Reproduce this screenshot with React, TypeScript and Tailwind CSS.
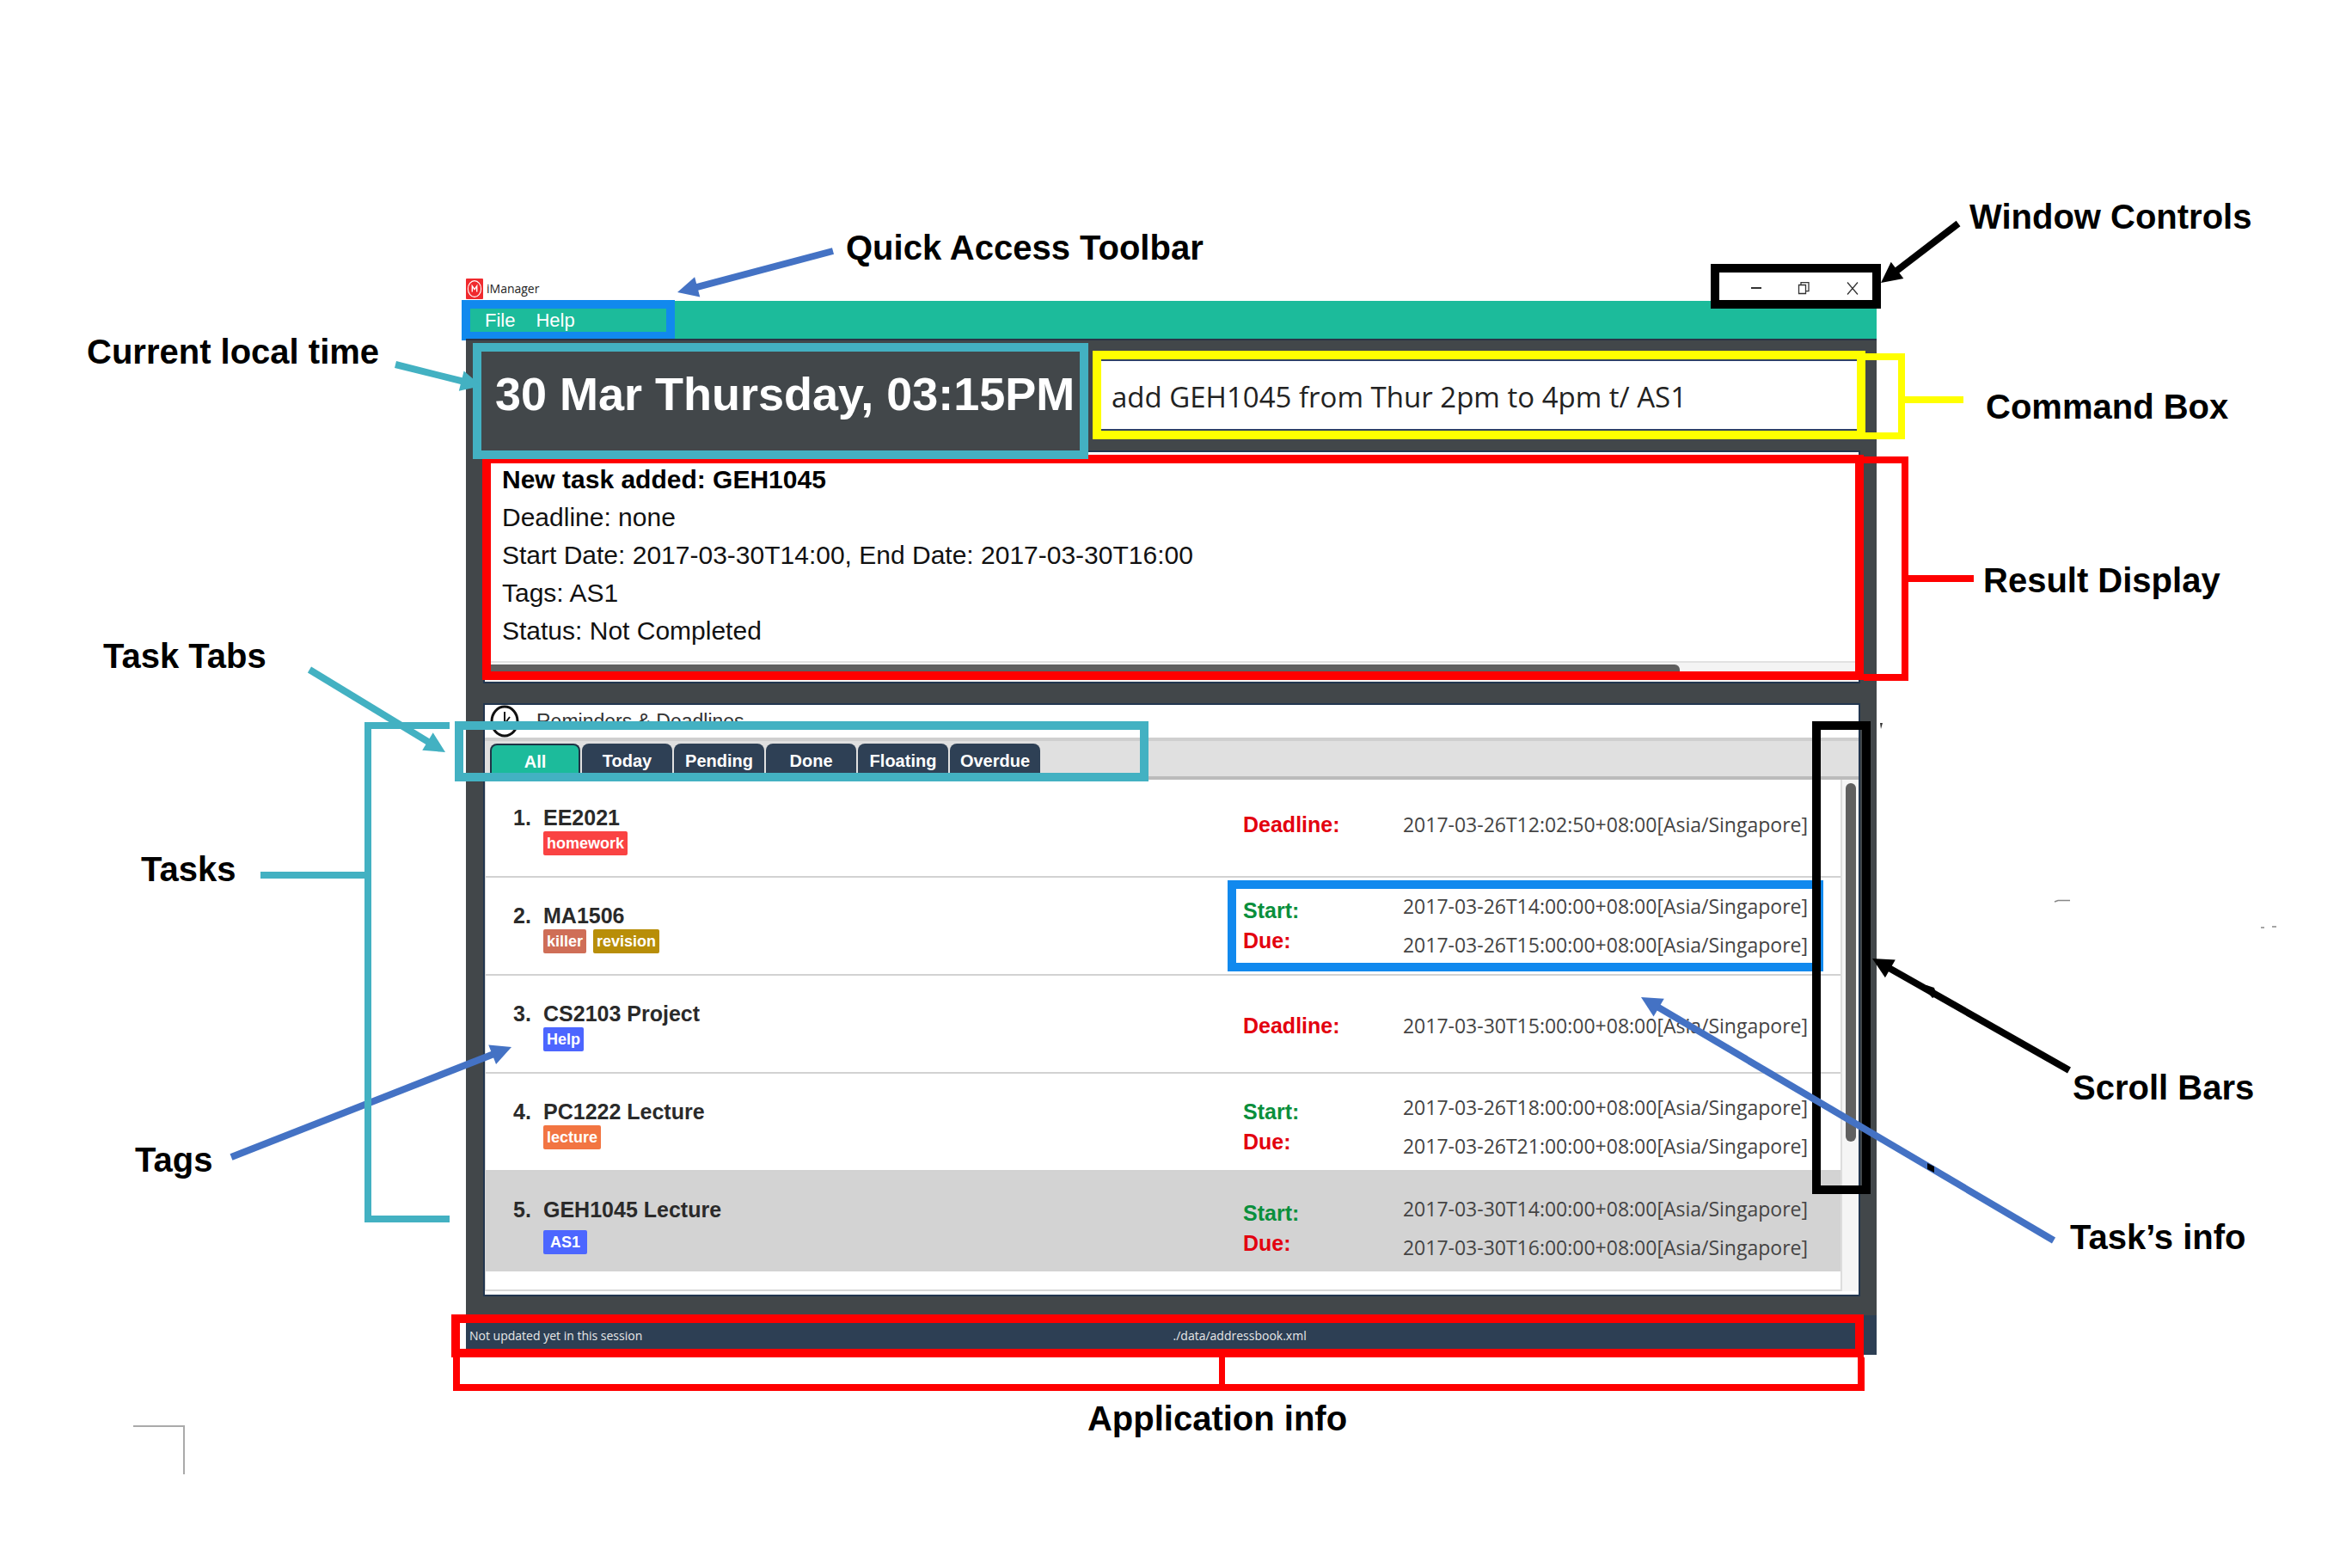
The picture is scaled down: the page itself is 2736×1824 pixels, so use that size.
import React, { useState } from "react";

type Tag = { name: string; color: string };
type Detail = { label: string; color: string; value: string };
type Task = { title: string; tags: Tag[]; details: Detail[]; shift: string };

const RED = "text-[#e3000f]";
const GREEN = "text-[#0a8f3c]";

const tasks: Task[] = [
  {
    title: "EE2021",
    tags: [{ name: "homework", color: "bg-[#fa4343]" }],
    details: [{ label: "Deadline:", color: RED, value: "2017-03-26T12:02:50+08:00[Asia/Singapore]" }],
    shift: "pb-2",
  },
  {
    title: "MA1506",
    tags: [
      { name: "killer", color: "bg-[#cf6e57]" },
      { name: "revision", color: "bg-[#b88e08]" },
    ],
    details: [
      { label: "Start:", color: GREEN, value: "2017-03-26T14:00:00+08:00[Asia/Singapore]" },
      { label: "Due:", color: RED, value: "2017-03-26T15:00:00+08:00[Asia/Singapore]" },
    ],
    shift: "pt-0",
  },
  {
    title: "CS2103 Project",
    tags: [{ name: "Help", color: "bg-[#4c66ff]" }],
    details: [{ label: "Deadline:", color: RED, value: "2017-03-30T15:00:00+08:00[Asia/Singapore]" }],
    shift: "pt-1",
  },
  {
    title: "PC1222 Lecture",
    tags: [{ name: "lecture", color: "bg-[#f27542]" }],
    details: [
      { label: "Start:", color: GREEN, value: "2017-03-26T18:00:00+08:00[Asia/Singapore]" },
      { label: "Due:", color: RED, value: "2017-03-26T21:00:00+08:00[Asia/Singapore]" },
    ],
    shift: "pt-3",
  },
  {
    title: "GEH1045 Lecture",
    tags: [{ name: "AS1", color: "bg-[#4c66ff]" }],
    details: [
      { label: "Start:", color: GREEN, value: "2017-03-30T14:00:00+08:00[Asia/Singapore]" },
      { label: "Due:", color: RED, value: "2017-03-30T16:00:00+08:00[Asia/Singapore]" },
    ],
    shift: "pt-4",
  },
];

const tabs = ["All", "Today", "Pending", "Done", "Floating", "Overdue"];

/** Coloured outline laid over the part it points out. */
function Frame({ className }: { className: string }) {
  return <div aria-hidden="true" className={`pointer-events-none absolute border-10 ${className}`} />;
}

/** Straight arrow with a solid triangular head at (x2, y2). */
function Arrow({ x1, y1, x2, y2, color }: { x1: number; y1: number; x2: number; y2: number; color: string }) {
  const length = Math.hypot(x2 - x1, y2 - y1);
  const ux = (x2 - x1) / length;
  const uy = (y2 - y1) / length;
  const bx = x2 - ux * 24;
  const by = y2 - uy * 24;
  return (
    <g fill={color} stroke="none">
      <line x1={x1} y1={y1} x2={bx + ux * 2} y2={by + uy * 2} stroke={color} strokeWidth={8} />
      <polygon points={`${x2},${y2} ${bx - uy * 12},${by + ux * 12} ${bx + uy * 12},${by - ux * 12}`} />
    </g>
  );
}

function Label({ className, children }: { className: string; children: React.ReactNode }) {
  return (
    <p className={`absolute text-[40px] leading-12 font-bold whitespace-nowrap text-black ${className}`}>{children}</p>
  );
}

function TitleBar() {
  return (
    <header className="relative flex h-8 items-center justify-between bg-white">
      <div className="flex items-center gap-1 pt-1">
        <svg viewBox="0 0 20 24" preserveAspectRatio="none" className="h-6 w-5" aria-hidden="true">
          <rect width="20" height="24" rx="1" fill="#f02a2e" />
          <ellipse cx="10" cy="12" rx="7.6" ry="9.400" fill="none" stroke="#fff" strokeWidth="1.1" />
          <path d="M7.300 15.500V8.800L10 12.600l2.700-3.800v6.700" fill="none" stroke="#fff" strokeWidth="1.4" />
        </svg>
        <h1 className="font-['Open_Sans','Noto_Sans',sans-serif] text-[14px] leading-5 text-[#222]">iManager</h1>
      </div>
      <div className="flex items-center pt-1 pr-5">
        <button aria-label="Minimize" className="flex h-6 w-14 items-center justify-center">
          <svg viewBox="0 0 16 16" className="size-4" stroke="#333" strokeWidth="2" fill="none">
            <path d="M2 7h12" />
          </svg>
        </button>
        <button aria-label="Restore" className="flex h-6 w-14 items-center justify-center">
          <svg viewBox="0 0 16 16" className="size-4" stroke="#333" strokeWidth="1.3" fill="none">
            <path d="M1.500 3.500h8v10h-8zM4 3.500V.7h9v10H9.500" />
          </svg>
        </button>
        <button aria-label="Close" className="flex h-6 w-9 items-center justify-end">
          <svg viewBox="0 0 16 16" className="size-4" stroke="#333" strokeWidth="1.3" fill="none">
            <path d="M2 .5l12 14M14 .5L2 14.500" />
          </svg>
        </button>
      </div>
      <Frame className="top-[-11px] right-[-5px] z-20 h-[52px] w-[198px] border-black" />
    </header>
  );
}

function MenuBar() {
  return (
    <nav className="relative flex h-11 items-center gap-6 bg-[#1cbb9b] pl-[22px] text-[22px] text-white">
      <button>File</button>
      <button>Help</button>
      <Frame className="-top-px left-[-5px] h-[47px] w-[248px] border-[#1189ee]" />
    </nav>
  );
}

function CommandRow() {
  return (
    <div className="relative z-10 flex h-[130px] items-start gap-[5px] border-t-2 border-[#2b3346] px-2 pt-[3px]">
      <time className="flex h-[135px] w-[716px] shrink-0 items-start border-10 border-[#43b1c2] pt-[14px] pl-4 text-[54px] leading-[70px] font-bold whitespace-nowrap text-white">
        30 Mar Thursday, 03:15PM
      </time>
      <div className="relative mt-[9px] mr-[5px] h-[103px] flex-1 border-10 border-[#ffff00]">
        <input
          aria-label="Command"
          defaultValue="add GEH1045 from Thur 2pm to 4pm t/ AS1"
          className="h-full w-full border-y-2 border-[#2f4265] bg-white px-3 pt-1 font-['Open_Sans','Noto_Sans',sans-serif] text-[33px] text-[#222] outline-none"
        />
        <div aria-hidden="true" className="absolute top-[-7px] -right-14 h-[100px] w-[46px] border-8 border-l-0 border-[#ffff00]" />
        <div aria-hidden="true" className="absolute top-[43px] left-full ml-14 h-2 w-[68px] bg-[#ffff00]" />
      </div>
    </div>
  );
}

function ResultDisplay() {
  return (
    <section aria-label="Result" className="relative mr-[19px] ml-5 h-[271px] border-2 border-[#22364f] bg-white">
      <div className="pt-[10px] pl-5 text-[30px] leading-11 text-[#111]">
        <p className="font-bold text-black">New task added: GEH1045</p>
        <p>Deadline: none</p>
        <p>Start Date: 2017-03-30T14:00, End Date: 2017-03-30T16:00</p>
        <p>Tags: AS1</p>
        <p>Status: Not Completed</p>
      </div>
      <div className="absolute right-0 bottom-0 left-0 h-6 border-t-2 border-[#e2e2e2] bg-[#f4f4f4] pt-0.5">
        <div className="h-4 w-[87%] rounded-r-md bg-[#5f5f5f]" />
      </div>
      <Frame className="top-[3px] right-[-6px] bottom-[2px] left-[-3px] border-[#ff0000]" />
      <div aria-hidden="true" className="absolute top-[5px] right-[-58px] h-[261px] w-[52px] border-8 border-l-0 border-[#ff0000]" />
      <div aria-hidden="true" className="absolute top-[143px] left-full ml-[58px] h-2 w-[76px] bg-[#ff0000]" />
    </section>
  );
}

function TaskRow({ task, index, selected }: { task: Task; index: number; selected: boolean }) {
  return (
    <li
      className={`relative flex pr-[38px] pl-8 ${
        selected ? "h-[116px] bg-[#d3d3d3]" : "h-[114px] border-b-2 border-[#d2d2d2]"
      }`}
    >
      <div className="flex flex-1 pt-7 text-[#2a2a2a]">
        <span className="w-[35px] text-[25px] leading-8 font-bold">{index + 1}.</span>
        <div>
          <h3 className="text-[25px] leading-8 font-bold">{task.title}</h3>
          <div className={`flex gap-2 ${selected ? "pt-2" : ""}`}>
            {task.tags.map((tag) => (
              <span
                key={tag.name}
                className={`rounded-xs text-[18px] leading-7 font-bold text-white ${
                  selected ? "px-2" : "px-1"
                } ${tag.color}`}
              >
                {tag.name}
              </span>
            ))}
          </div>
        </div>
      </div>
      <dl className={`flex w-[657px] items-center ${task.shift}`}>
        <div className="w-[186px] text-[25px] leading-[35px] font-bold">
          {task.details.map((d) => (
            <dt key={d.label} className={d.color}>
              {d.label}
            </dt>
          ))}
        </div>
        <div className="font-['Open_Sans','Noto_Sans',sans-serif] text-[23px] leading-[45px] whitespace-nowrap text-[#444]">
          {task.details.map((d) => (
            <dd key={d.label}>{d.value}</dd>
          ))}
        </div>
      </dl>
      {index === 1 && <Frame className="top-[3px] right-5 h-[106px] w-[693px] border-[#1189ee]" />}
    </li>
  );
}

function TaskPanel() {
  const [active, setActive] = useState("All");
  return (
    <section aria-label="Tasks" className="relative mt-[23px] mr-[19px] ml-5 border-2 border-[#22364f] bg-white">
      <div className="flex h-[38px] items-center gap-5 pl-1.5">
        <svg viewBox="0 0 34 38" className="h-[38px] w-[34px]" fill="none" stroke="#111" aria-hidden="true">
          <ellipse cx="17" cy="19" rx="15" ry="17" strokeWidth="3" />
          <path d="M17 8v14l6-8" strokeWidth="2" />
        </svg>
        <h2 className="text-[23px] text-[#333]">Reminders &amp; Deadlines</h2>
      </div>
      <div
        role="tablist"
        className="flex h-[49px] items-end gap-0.5 border-t-4 border-b-4 border-t-[#cfcfcf] border-b-[#bbb] bg-[#e0e0e0] pl-1.5"
      >
        {tabs.map((tab) => (
          <button
            key={tab}
            role="tab"
            aria-selected={tab === active}
            onClick={() => setActive(tab)}
            className={`h-[38px] w-[105px] rounded-t-lg pt-0.5 text-[20px] font-bold text-white ${
              tab === active ? "border-2 border-b-0 border-[#1f3346] bg-[#1cbb9b]" : "bg-[#2e4055]"
            }`}
          >
            {tab}
          </button>
        ))}
      </div>
      <div className="flex h-[599px] pb-1">
        <ul className="flex-1 border-b-2 border-l border-[#d8d8d8]">
          {tasks.map((task, i) => (
            <TaskRow key={task.title} task={task} index={i} selected={i === 4} />
          ))}
        </ul>
        <div className="flex w-[21px] justify-center border-l-2 border-[#ddd] bg-[#f5f5f5] pt-1">
          <div className="h-[417px] w-3 rounded-md bg-[#606060]" />
        </div>
      </div>
      <Frame className="top-[19px] left-[-35px] h-[70px] w-[807px] border-[#43b1c2]" />
      <Frame className="top-[19px] right-[-14px] h-[550px] w-[68px] border-black" />
    </section>
  );
}

function StatusBar() {
  return (
    <footer className="relative mt-[22px] flex h-[46px] items-center bg-[#2d3f54] pl-1 font-['Open_Sans','Noto_Sans',sans-serif] text-[14px] text-[#e8e8e8]">
      <span className="w-1/2">Not updated yet in this session</span>
      <span>./data/addressbook.xml</span>
      <Frame className="-top-px right-[15px] left-[-17px] h-[50px] border-[#ff0000]" />
      <div
        aria-hidden="true"
        className="absolute top-[49px] right-[14px] left-[-15px] flex h-[39px] border-8 border-t-0 border-[#ff0000]"
      >
        <div className="flex-6 border-r-7 border-[#ff0000]" />
        <div className="flex-5" />
      </div>
    </footer>
  );
}

export default function App() {
  return (
    <main className="relative min-h-screen overflow-hidden bg-white pt-[318px] pr-[553px] pb-40 pl-[542px] font-['Liberation_Sans',Arial,sans-serif]">
      <div className="bg-[#42474a]">
        <TitleBar />
        <MenuBar />
        <CommandRow />
        <ResultDisplay />
        <TaskPanel />
        <StatusBar />
      </div>
      <p className="mt-[50px] pl-[107px] text-center text-[40px] leading-12 font-bold text-black">Application info</p>

      <svg aria-hidden="true" className="pointer-events-none absolute top-0 left-0 z-20 h-[1824px] w-[1100px]" fill="none">
        <Arrow x1={969} y1={292} x2={788} y2={340} color="#4472c4" />
        <Arrow x1={460} y1={424} x2={560} y2={449} color="#43b1c2" />
        <Arrow x1={360} y1={779} x2={518} y2={875} color="#43b1c2" />
        <Arrow x1={269} y1={1346} x2={595} y2={1218} color="#4472c4" />
        <path d="M523 844H428V1418H523M303 1018H428" stroke="#43b1c2" strokeWidth={8} />
        <path d="M155 1659H214V1715" stroke="#aaa" strokeWidth={2} />
      </svg>
      <svg
        aria-hidden="true"
        viewBox="1836 0 900 1824"
        className="pointer-events-none absolute top-0 right-0 z-20 h-[1824px] w-[900px]"
        fill="none"
      >
        <Arrow x1={2278} y1={260} x2={2188} y2={329} color="#000" />
        <Arrow x1={2407} y1={1245} x2={2178} y2={1115} color="#000" />
        <path d="M2241 1146l9 3 3 9-5 3-7-8z" fill="#000" />
        <Arrow x1={2389} y1={1443} x2={1909} y2={1160} color="#4472c4" />
        <path d="M2242 1353l8 4v7l-8-4z" fill="#000" />
        <path d="M2187 841h3l-2 7z" fill="#333" />
        <path d="M2390 1049l4-1.500h14" stroke="#888" strokeWidth={1.500} />
        <path d="M2630 1079h4M2643 1078h5" stroke="#888" strokeWidth={1.500} />
      </svg>

      <aside aria-label="Callouts">
        <Label className="top-[264px] left-[984px]">Quick Access Toolbar</Label>
        <Label className="top-[385px] left-[101px]">Current local time</Label>
        <Label className="top-[739px] left-[120px]">Task Tabs</Label>
        <Label className="top-[987px] left-[164px]">Tasks</Label>
        <Label className="top-[1325px] left-[157px]">Tags</Label>
        <div className="absolute top-0 right-0 w-[553px]">
          <Label className="top-[228px] left-[108px]">Window Controls</Label>
          <Label className="top-[449px] left-[127px]">Command Box</Label>
          <Label className="top-[651px] left-[124px]">Result Display</Label>
          <Label className="top-[1241px] left-[228px]">Scroll Bars</Label>
          <Label className="top-[1415px] left-[225px]">Task’s info</Label>
        </div>
      </aside>
    </main>
  );
}
